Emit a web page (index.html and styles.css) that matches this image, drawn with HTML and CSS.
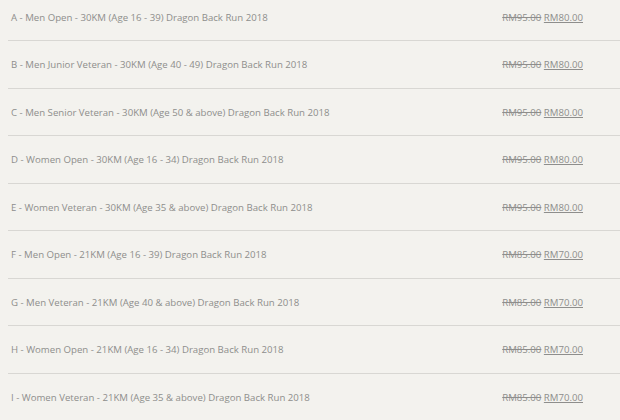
FILE: index.html
```html
<!DOCTYPE html>
<html>
<head>
<meta charset="utf-8">
<link rel="stylesheet" href="styles.css">
</head>
<body>
<ul class="tickets">
  <li class="ticket"><span class="name">A - Men Open - 30KM (Age 16 - 39) Dragon Back Run 2018</span><span class="price"><del>RM95.00</del> <ins>RM80.00</ins></span></li>
  <li class="ticket"><span class="name">B - Men Junior Veteran - 30KM (Age 40 - 49) Dragon Back Run 2018</span><span class="price"><del>RM95.00</del> <ins>RM80.00</ins></span></li>
  <li class="ticket"><span class="name">C - Men Senior Veteran - 30KM (Age 50 &amp; above) Dragon Back Run 2018</span><span class="price"><del>RM95.00</del> <ins>RM80.00</ins></span></li>
  <li class="ticket"><span class="name">D - Women Open - 30KM (Age 16 - 34) Dragon Back Run 2018</span><span class="price"><del>RM95.00</del> <ins>RM80.00</ins></span></li>
  <li class="ticket"><span class="name">E - Women Veteran - 30KM (Age 35 &amp; above) Dragon Back Run 2018</span><span class="price"><del>RM95.00</del> <ins>RM80.00</ins></span></li>
  <li class="ticket"><span class="name">F - Men Open - 21KM (Age 16 - 39) Dragon Back Run 2018</span><span class="price"><del>RM85.00</del> <ins>RM70.00</ins></span></li>
  <li class="ticket"><span class="name">G - Men Veteran - 21KM (Age 40 &amp; above) Dragon Back Run 2018</span><span class="price"><del>RM85.00</del> <ins>RM70.00</ins></span></li>
  <li class="ticket"><span class="name">H - Women Open - 21KM (Age 16 - 34) Dragon Back Run 2018</span><span class="price"><del>RM85.00</del> <ins>RM70.00</ins></span></li>
  <li class="ticket"><span class="name">I - Women Veteran - 21KM (Age 35 &amp; above) Dragon Back Run 2018</span><span class="price"><del>RM85.00</del> <ins>RM70.00</ins></span></li>
</ul>
</body>
</html>
```
FILE: styles.css
```css
html, body {
  margin: 0;
  padding: 0;
  background: #f3f2ee;
  overflow: hidden;
}
body {
  font-family: "Open Sans", "Liberation Sans", sans-serif;
  font-size: 9.65px;
  color: #8e8e8c;
}
.tickets {
  list-style: none;
  margin: -6.5px 0 0 8px;
  padding: 0;
}
.ticket {
  display: flex;
  justify-content: space-between;
  align-items: center;
  padding: 17px 37px 15px 3px;
  line-height: 14.5px;
  border-bottom: 1px solid #d8d7d3;
}
.price del {
  color: #8e8e8c;
  text-decoration: line-through;
}
.price ins {
  color: #8e8e8c;
  text-decoration: underline;
}
```
